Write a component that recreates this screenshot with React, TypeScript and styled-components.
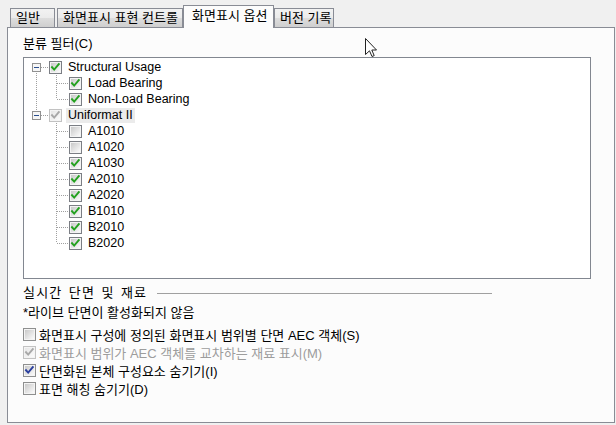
import { useId } from 'react';
import styled, { createGlobalStyle } from 'styled-components';

const GlobalStyle = createGlobalStyle`
  html, body {
    margin: 0;
    padding: 0;
    background: #f0f0f0;
  }
  body {
    font-family: "Liberation Sans", "Noto Sans CJK KR", sans-serif;
    font-size: 13px;
    color: #000;
  }
`;

type Node = {
  label: string;
  checked?: boolean;
  disabled?: boolean;
  selected?: boolean;
  children?: Node[];
};

const tree: Node[] = [
  {
    label: 'Structural Usage',
    checked: true,
    children: [
      { label: 'Load Bearing', checked: true },
      { label: 'Non-Load Bearing', checked: true },
    ],
  },
  {
    label: 'Uniformat II',
    checked: true,
    disabled: true,
    selected: true,
    children: [
      { label: 'A1010' },
      { label: 'A1020' },
      { label: 'A1030', checked: true },
      { label: 'A2010', checked: true },
      { label: 'A2020', checked: true },
      { label: 'B1010', checked: true },
      { label: 'B2010', checked: true },
      { label: 'B2020', checked: true },
    ],
  },
];

type FlatRow = {
  node: Node;
  level: number;
  first: boolean;
  last: boolean;
  guides: boolean[]; // per ancestor: does it have a next sibling
};

const flatten = (nodes: Node[], level = 0, guides: boolean[] = []): FlatRow[] =>
  nodes.flatMap((node, i) => {
    const last = i === nodes.length - 1;
    const row: FlatRow = { node, level, first: i === 0, last, guides };
    return [row, ...(node.children ? flatten(node.children, level + 1, [...guides, !last]) : [])];
  });

const rows = flatten(tree);

const options = [
  { label: '화면표시 구성에 정의된 화면표시 범위별 단면 AEC 객체(S)' },
  { label: '화면표시 범위가 AEC 객체를 교차하는 재료 표시(M)', checked: true, disabled: true },
  { label: '단면화된 본체 구성요소 숨기기(I)', checked: true },
  { label: '표면 해칭 숨기기(D)' },
];

const tabs = [
  { label: '일반', width: 45, gap: 2 },
  { label: '화면표시 표현 컨트롤', width: 126, gap: 0 },
  { label: '화면표시 옵션', width: 91, gap: 0, active: true },
  { label: '버전 기록', width: 60, gap: 0 },
];

const CheckBox = ({
  checked,
  disabled,
  tone,
}: {
  checked?: boolean;
  disabled?: boolean;
  tone: 'green' | 'blue';
}) => {
  const id = useId().replace(/:/g, '');
  const border = disabled ? '#c2c2c2' : tone === 'green' ? '#7b7e84' : '#8e8f8f';
  const check = disabled ? '#a8a8a8' : tone === 'green' ? '#23a11f' : '#2a3f9e';
  return (
    <BoxSvg width="13" height="13" viewBox="0 0 13 13">
      <defs>
        <linearGradient id={`g${id}`} x1="0" y1="0" x2="1" y2="1">
          <stop offset="0" stopColor={disabled ? '#e6e6e6' : '#c9c9c9'} />
          <stop offset="1" stopColor="#fbfbfb" />
        </linearGradient>
      </defs>
      <rect x="0.5" y="0.5" width="12" height="12" fill="#f4f4f4" stroke={border} />
      <rect x="2" y="2" width="9" height="9" fill={`url(#g${id})`} />
      {checked && (
        <polyline
          points="3,6.2 5.2,8.6 9.8,3.2"
          fill="none"
          stroke={check}
          strokeWidth="1.9"
          strokeLinecap="square"
        />
      )}
    </BoxSvg>
  );
};

const Connector = ({ row }: { row: FlatRow }) => {
  const up = !(row.level === 0 && row.first);
  const down = !row.last;
  const hasChildren = !!row.node.children;
  return (
    <CellSvg width="22" height="16" viewBox="0 0 22 16">
      <g stroke="#a0a0a0" strokeDasharray="1 1" shapeRendering="crispEdges">
        {up && <line x1="9.5" y1="0" x2="9.5" y2="8" />}
        {down && <line x1="9.5" y1="8" x2="9.5" y2="16" />}
        <line x1="10" y1="8.5" x2="22" y2="8.5" />
      </g>
      {hasChildren && (
        <g shapeRendering="crispEdges">
          <rect x="5.5" y="4.5" width="8" height="8" fill="#f6f6f6" stroke="#919191" />
          <line x1="7" y1="8.5" x2="12" y2="8.5" stroke="#2b4f8f" />
        </g>
      )}
    </CellSvg>
  );
};

const Guide = ({ on }: { on: boolean }) => (
  <CellSvg width="20" height="16" viewBox="0 0 20 16">
    {on && (
      <line
        x1="9.5"
        y1="0"
        x2="9.5"
        y2="16"
        stroke="#a0a0a0"
        strokeDasharray="1 1"
        shapeRendering="crispEdges"
      />
    )}
  </CellSvg>
);

const Cursor = () => (
  <CursorSvg width="13" height="20" viewBox="0 0 13 20">
    <path
      d="M0.5 0.5 L0.5 16.5 L4.5 12.8 L7 18.5 L9.2 17.6 L6.8 12 L11.5 12 Z"
      fill="#fff"
      stroke="#222"
      strokeLinejoin="miter"
    />
  </CursorSvg>
);

export default function App() {
  return (
    <>
      <GlobalStyle />
      <Window>
        <TabStrip>
          {tabs.map((t) => (
            <Tab key={t.label} $width={t.width} $gap={t.gap} $active={!!t.active}>
              {t.label}
            </Tab>
          ))}
        </TabStrip>
        <Panel>
          <GroupLabel>분류 필터(C)</GroupLabel>
          <TreeBox>
            {rows.map((row) => (
              <TreeRow key={row.node.label}>
                {row.guides.map((g, i) => (
                  <Guide key={i} on={g} />
                ))}
                <Connector row={row} />
                <CheckBox tone="green" checked={row.node.checked} disabled={row.node.disabled} />
                <TreeLabel $selected={!!row.node.selected}>{row.node.label}</TreeLabel>
              </TreeRow>
            ))}
          </TreeBox>
          <SectionHeader>
            <SectionTitle>실시간 단면 및 재료</SectionTitle>
            <Rule />
          </SectionHeader>
          <Note>*라이브 단면이 활성화되지 않음</Note>
          <OptionList>
            {options.map((o) => (
              <OptionRow key={o.label} $disabled={!!o.disabled}>
                <CheckBox tone="blue" checked={o.checked} disabled={o.disabled} />
                <span>{o.label}</span>
              </OptionRow>
            ))}
          </OptionList>
        </Panel>
        <Cursor />
      </Window>
    </>
  );
}

const Window = styled.div`
  position: relative;
  width: 616px;
  height: 425px;
  box-sizing: border-box;
  padding-top: 5px;
  overflow: hidden;
  background: #f0f0f0;
`;

const TabStrip = styled.div`
  position: relative;
  z-index: 1;
  display: flex;
  align-items: flex-end;
  height: 23px;
  padding-left: 10px;
  margin-bottom: -1px;
`;

const Tab = styled.div<{ $width: number; $gap: number; $active: boolean }>`
  box-sizing: border-box;
  width: ${(p) => p.$width}px;
  height: ${(p) => (p.$active ? 23 : 19)}px;
  margin-right: ${(p) => p.$gap}px;
  margin-bottom: ${(p) => (p.$active ? 0 : 1)}px;
  padding: ${(p) => (p.$active ? '0 0 3px 8px' : '0 0 0 5px')};
  border: 1px solid #898c95;
  border-bottom: none;
  background: ${(p) =>
    p.$active ? '#fcfcfc' : 'linear-gradient(#f2f2f2 0%, #ebebeb 50%, #dddddd 51%, #cfcfcf 100%)'};
  display: flex;
  align-items: center;
  white-space: nowrap;
  line-height: 16px;
`;

const Panel = styled.div`
  box-sizing: border-box;
  width: 608px;
  height: 396px;
  margin-left: 7px;
  padding: 8px 23px 0 15px;
  border: 1px solid #898c95;
  background: #fcfcfc;
  display: flex;
  flex-direction: column;
`;

const GroupLabel = styled.div`
  line-height: 16px;
  margin-bottom: 5px;
`;

const TreeBox = styled.div`
  box-sizing: border-box;
  height: 222px;
  padding: 1px 0 0 3px;
  border: 1px solid #828790;
  background: #fff;
  font-size: 12.5px;
`;

const TreeRow = styled.div`
  display: flex;
  align-items: center;
  height: 16px;
`;

const CellSvg = styled.svg`
  display: block;
  flex-shrink: 0;
`;

const BoxSvg = styled.svg`
  display: block;
  flex-shrink: 0;
`;

const TreeLabel = styled.span<{ $selected: boolean }>`
  margin-left: 4px;
  padding: 0 2px;
  line-height: 15px;
  white-space: nowrap;
  background: ${(p) => (p.$selected ? '#ebebeb' : 'transparent')};
`;

const SectionHeader = styled.div`
  display: flex;
  align-items: center;
  gap: 10px;
  margin-top: 6px;
  line-height: 16px;
`;

const SectionTitle = styled.span`
  letter-spacing: 1.2px;
  word-spacing: 1.5px;
  white-space: nowrap;
`;

const Rule = styled.div`
  flex: 1;
  height: 1px;
  margin-right: 99px;
  background: #a0a0a0;
`;

const Note = styled.div`
  margin-top: 4px;
  line-height: 16px;
`;

const OptionList = styled.div`
  margin-top: 4px;
  display: flex;
  flex-direction: column;
`;

const OptionRow = styled.label<{ $disabled: boolean }>`
  display: flex;
  align-items: center;
  gap: 3px;
  height: 18px;
  color: ${(p) => (p.$disabled ? '#9d9d9d' : '#000')};
  white-space: nowrap;
`;

const CursorSvg = styled.svg`
  position: absolute;
  left: 365px;
  top: 38px;
  display: block;
`;
